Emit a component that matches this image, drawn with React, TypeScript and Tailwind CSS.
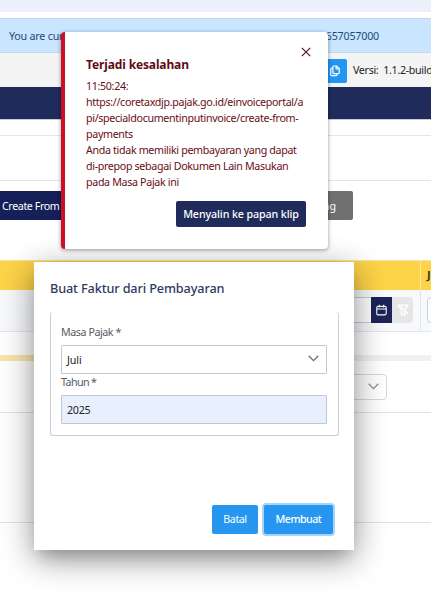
import { useState } from "react";

function CalendarIcon() {
  return (
    <svg viewBox="0 0 14 14" className="h-[12px] w-[11px]" fill="none" stroke="currentColor" strokeWidth="1.4">
      <rect x="1" y="2.4" width="12" height="10.8" rx="1.6" />
      <path d="M1 5.8h12M4.2 0.4v3.4M9.8 0.4v3.4" />
    </svg>
  );
}

function FilterSlashIcon() {
  return (
    <svg viewBox="0 0 14 14" className="h-3 w-3" fill="none" stroke="currentColor" strokeWidth="1.7" strokeLinejoin="round">
      <path d="M4.4 1.4H13L9.6 6.2M1 1.4l4.2 5.4V13h3.6V8.6" />
      <path d="M2 0.6l11 11" />
    </svg>
  );
}

function CopyIcon() {
  return (
    <svg viewBox="0 0 14 16" className="h-[12px] w-[10px]" fill="none" stroke="currentColor" strokeWidth="1.7" strokeLinejoin="round">
      <path d="M5.4 1h3.8L13 4.8v5.4a1.4 1.4 0 0 1-1.4 1.4H5.4A1.4 1.4 0 0 1 4 10.2V2.4A1.4 1.4 0 0 1 5.4 1Z" />
      <path d="M8.6 1v4.2H13M4 4H2.4A1.4 1.4 0 0 0 1 5.4v7.8a1.4 1.4 0 0 0 1.4 1.4h6a1.4 1.4 0 0 0 1.4-1.4v-1.6" />
    </svg>
  );
}

function ChevronIcon() {
  return (
    <svg viewBox="0 0 11 7" className="h-[7px] w-[11px]" fill="none" stroke="currentColor" strokeWidth="1.3">
      <path d="M0.7 0.8 5.5 5.6 10.3 0.8" />
    </svg>
  );
}

function Background() {
  return (
    <div className="flex h-full flex-col">
      <div className="h-3 shrink-0 bg-[#ecf0fa]" />
      <div className="h-1.5 shrink-0" />
      <div className="flex h-[35px] shrink-0 items-center justify-between border-y border-[#c5d6e8] bg-[#cae5ff] pt-px pr-[52px] pl-[9px] text-[10.7px] text-[#1c4a78]">
        <span className="tracking-[-0.2px] whitespace-nowrap">You are cur</span>
        <span className="tracking-[-0.2px] whitespace-nowrap">657057000</span>
      </div>
      <div className="flex h-[34px] shrink-0 items-center bg-[#f4f4f4] pl-[323px]">
        <div className="mt-0.5 flex h-6 w-6 shrink-0 items-center justify-center rounded-r-xs bg-[#2196f3] pr-1 pl-1 text-white">
          <CopyIcon />
        </div>
        <span className="ml-1.5 text-[10.7px] tracking-[-0.33px] whitespace-pre text-[#222]">Versi:  1.1.2-build</span>
      </div>
      <div className="h-[33px] shrink-0 border-b border-[#c9c9cf] bg-[#1f2b5b]" />
      <div className="h-[15px] shrink-0" />
      <div className="h-[46px] shrink-0 border-y border-[#e6e6e6]" />
      <div className="flex h-[79px] shrink-0 items-start justify-between pt-[10px] pr-[78px] text-[10.7px] text-white">
        <div className="flex h-[29px] w-[90px] items-center bg-[#151f58] pt-px pl-0.5 tracking-[-0.4px] whitespace-nowrap">
          Create From
        </div>
        <div className="flex h-[29px] w-[50px] items-center justify-end rounded-r-xs bg-[#707070] pt-px pr-[17px]">ng</div>
      </div>

      {/* table header + filters */}
      <div className="flex h-[30px] shrink-0 border-t border-[#f1e6b4] bg-[#fdd348] text-[11px] font-bold text-[#333]">
        <div className="w-[421px] shrink-0 border-r border-[#f6e8b0]" />
        <div className="flex items-center pl-1.5">J</div>
      </div>
      <div className="flex h-[42px] shrink-0 border-b border-[#e2e5ea] bg-[#f8f9fb]">
        <div className="flex w-[421px] shrink-0 items-start border-r border-[#e2e5ea] pt-[7px] pl-[340px]">
          <div className="h-[26px] w-[31px] border border-r-0 border-[#c5cfdc] bg-white" />
          <div className="flex h-[26px] w-[21px] items-center justify-center bg-[#1c2459] pb-px text-white">
            <CalendarIcon />
          </div>
          <div className="flex h-[26px] w-[21px] items-center justify-center rounded-r bg-[#e5e6e8] text-white">
            <FilterSlashIcon />
          </div>
        </div>
        <div className="mt-[7px] ml-1.5 h-[26px] w-10 shrink-0 rounded border border-[#c5cfdc] bg-white" />
      </div>
      <div className="h-[23px] shrink-0" />
      <div className="flex h-1.5 shrink-0">
        <div className="w-[200px] bg-[#f8e6ac]" />
        <div className="flex-1 bg-[#f1f1f1]" />
      </div>
      <div className="h-[52px] shrink-0 border-b border-[#dfe2e6] pt-[13px] pl-[300px]">
        <div className="flex h-[26px] w-[87px] items-center justify-end rounded border border-[#d5d9df] pr-[7px] pb-0.5 text-[#8a8f96]">
          <ChevronIcon />
        </div>
      </div>
      <div className="h-[110px] shrink-0 border-b border-[#dfe2e6]" />
    </div>
  );
}

function Toast({ onClose }: { onClose: () => void }) {
  return (
    <div className="absolute top-8 left-[61px] h-[217px] w-[267px] rounded border-l-4 border-[#cb0f29] bg-white pt-[24px] pl-[21px] text-[#690d16] shadow-[0_1px_4px_rgba(0,0,0,0.4)]">
      <button onClick={onClose} className="absolute top-[15px] right-[17px] text-[#5f1520]" aria-label="Tutup">
        <svg viewBox="0 0 10 10" className="h-[10px] w-[10px]" fill="none" stroke="currentColor" strokeWidth="1.2">
          <path d="m0.8 0.8 8.4 8.4M9.2 0.8 0.8 9.2" />
        </svg>
      </button>
      <h2 className="pt-px text-[12px] leading-4 font-bold tracking-[-0.13px] text-[#5f0c14]">Terjadi kesalahan</h2>
      <p className="mt-[5px] text-[10.7px] leading-4 tracking-[-0.34px] whitespace-nowrap">
        11:50:24:
        <br />
        https://coretaxdjp.pajak.go.id/einvoiceportal/a
        <br />
        pi/specialdocumentinputinvoice/create-from-
        <br />
        payments
        <br />
        Anda tidak memiliki pembayaran yang dapat
        <br />
        di-prepop sebagai Dokumen Lain Masukan
        <br />
        pada Masa Pajak ini
      </p>
      <button className="mt-[11px] ml-[90px] flex h-[26px] w-[130px] items-center justify-center rounded-xs bg-[#1f2b5b] text-[10.7px] font-medium tracking-[-0.1px] whitespace-nowrap text-white">
        Menyalin ke papan klip
      </button>
    </div>
  );
}

function InvoiceDialog() {
  const [year, setYear] = useState("2025");

  return (
    <div className="absolute top-[262px] left-[34px] flex h-[288px] w-[320px] flex-col bg-white px-4 pt-[17px] text-[10.7px] shadow-[0_11px_15px_-7px_rgba(0,0,0,0.2),0_10px_32px_rgba(0,0,0,0.32),0_4px_30px_rgba(0,0,0,0.12)]">
      <h1 className="text-[12.7px] leading-[19px] font-medium tracking-[-0.13px] text-[#2f3a62]">Buat Faktur dari Pembayaran</h1>
      <div className="mt-[14px] h-[124px] w-[289px] shrink-0 rounded-[3px] border border-t-0 border-[#c9cfd6] px-[10px] pt-[12px]">
        <label className="block h-[21px] leading-4 tracking-[-0.44px] text-[#555b63]">Masa Pajak *</label>
        <div className="flex h-[29px] w-[266px] items-center justify-between rounded-[1px] border border-[#bfc8d3] pr-[7px] pl-[5px] text-[#222]">
          <span className="pt-px tracking-[-0.1px]">Juli</span>
          <span className="pb-[3px] text-[#68707a]">
            <ChevronIcon />
          </span>
        </div>
        <label className="block h-[21px] leading-4 tracking-[-0.6px] text-[#555b63]">Tahun *</label>
        <input
          value={year}
          onChange={(e) => setYear(e.target.value)}
          className="block h-[29px] w-[266px] rounded-[1px] border border-[#bfc8d3] bg-[#e8f0fe] pt-px pl-[5px] tracking-[-0.3px] text-[#222] outline-none"
        />
      </div>
      <div className="mt-[69px] flex justify-end gap-[6px] pr-[5px] text-white">
        <button className="h-[29px] w-[46px] rounded-xs bg-[#2796f0] tracking-[-0.45px]">Batal</button>
        <button className="h-[29px] w-[69px] rounded-xs bg-[#2796f0] font-medium tracking-[-0.55px] shadow-[0_0_0_2px_#a6d5fa]">Membuat</button>
      </div>
    </div>
  );
}

export default function App() {
  const [showToast, setShowToast] = useState(true);

  return (
    <main className="relative h-[590px] w-[431px] overflow-hidden bg-white font-['Noto_Sans',sans-serif]">
      <Background />
      <InvoiceDialog />
      {showToast && <Toast onClose={() => setShowToast(false)} />}
    </main>
  );
}
